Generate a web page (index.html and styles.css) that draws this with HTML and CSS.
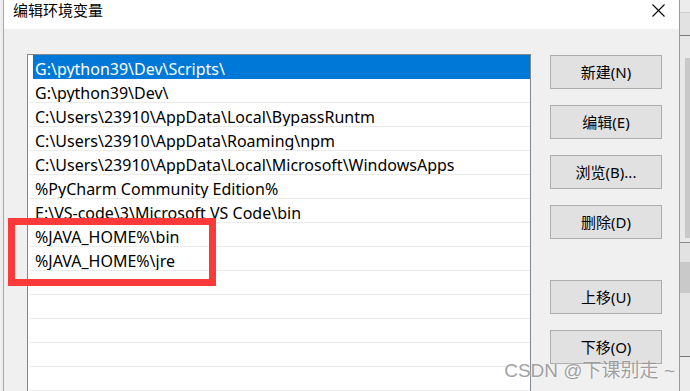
FILE: index.html
```html
<!DOCTYPE html>
<html lang="zh-CN">
  <head>
    <meta charset="UTF-8" />
    <meta name="viewport" content="width=device-width, initial-scale=1.0" />
    <title>编辑环境变量</title>
    <link rel="stylesheet" href="styles.css">
  </head>
  <body>
    <div class="screen">
      <div class="edge-left"></div>

      <div class="dialog">
        <div class="titlebar">
          <span class="title">编辑环境变量</span>
          <svg class="close" width="13" height="13" viewBox="0 0 13 13">
            <path d="M0.5 0.5 L12.5 12.5 M12.5 0.5 L0.5 12.5" stroke="#000" stroke-width="1.1" fill="none" />
          </svg>
        </div>

        <div class="content">
          <div class="path-list">
            <div class="row selected">G:\python39\Dev\Scripts\</div>
            <div class="row">G:\python39\Dev\</div>
            <div class="row">C:\Users\23910\AppData\Local\BypassRuntm</div>
            <div class="row">C:\Users\23910\AppData\Roaming\npm</div>
            <div class="row">C:\Users\23910\AppData\Local\Microsoft\WindowsApps</div>
            <div class="row">%PyCharm Community Edition%</div>
            <div class="row">E:\VS-code\3\Microsoft VS Code\bin</div>
            <div class="row">%JAVA_HOME%\bin</div>
            <div class="row">%JAVA_HOME%\jre</div>
            <div class="row"></div>
            <div class="row"></div>
            <div class="row"></div>
            <div class="row"></div>
            <div class="row"></div>
            <div class="row"></div>
          </div>

          <div class="actions">
            <button>新建(N)</button>
            <button>编辑(E)</button>
            <button>浏览(B)...</button>
            <button>删除(D)</button>
            <button class="move-up">上移(U)</button>
            <button>下移(O)</button>
          </div>
        </div>
      </div>

      <div class="edge-right">
        <div class="er-head"></div>
        <div class="er-head2"></div>
        <div class="er-scroll"><div class="er-thumb"></div></div>
      </div>
    </div>

    <div class="mark-box"></div>
    <div class="watermark">CSDN @下课别走 ~</div>
  </body>
</html>
```

FILE: styles.css
```css
body {
  margin: 0;
  font-family: "Noto Sans", "Noto Sans CJK SC", sans-serif;
  background-color: #f0f0f0;
  overflow: hidden;
}
.screen {
  display: flex;
  width: 690px;
  height: 391px;
  overflow: hidden;
}
.edge-left {
  width: 3px;
  background: #eeeeee;
  border-right: 1px solid #a6a6a6;
}
.dialog {
  width: 675px;
  display: flex;
  flex-direction: column;
  background: #f0f0f0;
  border-right: 1px solid #9a9a9a;
}
.titlebar {
  flex-shrink: 0;
  height: 29px;
  background: white;
  display: flex;
  align-items: flex-start;
}
.title {
  margin: 2px 0 0 9px;
  font-family: "Noto Sans CJK SC", sans-serif;
  font-size: 15px;
  line-height: 16px;
  color: #000;
}
.close {
  margin: 4px 14px 0 auto;
}
.content {
  flex-shrink: 0;
  display: flex;
  align-items: flex-start;
  padding: 25px 0 0 23px;
}
.path-list {
  width: 502px;
  height: 400px;
  background: white;
  border: 1px solid #828790;
  font-size: 16px;
  color: #000;
}
.row {
  height: 24px;
  box-sizing: border-box;
  margin-left: 1px;
  padding: 4px 0 0 6px;
  line-height: 20px;
  border-bottom: 1px solid #ebebeb;
  white-space: nowrap;
  overflow: hidden;
}
.row.selected {
  margin-left: 5px;
  padding-left: 2px;
  background: #0078d7;
  border-bottom-color: #0078d7;
  color: white;
}
.actions {
  display: flex;
  flex-direction: column;
  gap: 16px;
  margin: 1px 0 0 19px;
}
button {
  width: 112px;
  height: 34px;
  box-sizing: border-box;
  padding: 0 0 2px 0;
  background: #e1e1e1;
  border: 1px solid #adadad;
  font-family: "Noto Sans", "Noto Sans CJK SC", sans-serif;
  font-size: 15px;
  color: #000;
}
.actions .move-up {
  margin-top: 25px;
}
.edge-right {
  width: 10px;
  display: flex;
  flex-direction: column;
  background: #e4e4e4;
}
.er-head {
  height: 12px;
  background: #ececec;
  border-bottom: 1px solid #cfcfcf;
}
.er-head2 {
  height: 22px;
  background: #e2e2e2;
  border-bottom: 1px solid #7a7a7a;
}
.er-scroll {
  flex: 1;
  display: flex;
  justify-content: flex-end;
  padding-top: 22px;
  background: linear-gradient(#e8e8e8 0 206px, #8a8a8a 206px 207px, #e2e2e2 207px 226px, #c9c9c9 226px 257px, #e4e4e4 257px 320px, #777 320px 321px, #ececec 321px);
}
.er-thumb {
  width: 5px;
  height: 180px;
  background: #c8c8c8;
}
.mark-box {
  position: absolute;
  left: 8px;
  top: 218px;
  width: 208px;
  height: 68px;
  box-sizing: border-box;
  border: 7px solid #fc3a3a;
}
.watermark {
  position: absolute;
  right: 15px;
  top: 360px;
  font-family: "Liberation Sans", "Noto Sans CJK SC", sans-serif;
  font-size: 19px;
  line-height: 22px;
  color: rgba(120, 120, 120, 0.7);
  text-shadow: 0 0 2px rgba(255, 255, 255, 0.9);
  white-space: nowrap;
}
```
